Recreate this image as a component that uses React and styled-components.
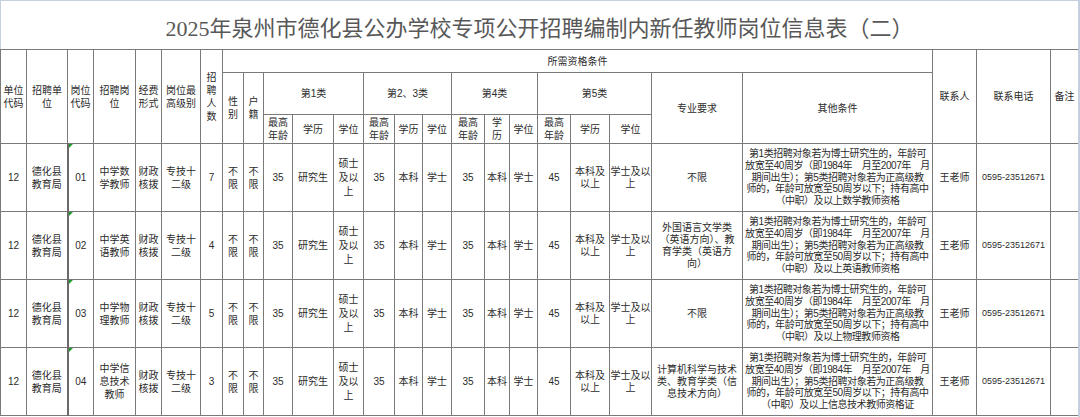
import React from 'react';
import styled, { createGlobalStyle } from 'styled-components';

const Global = createGlobalStyle`
  html, body { margin: 0; padding: 0; background: #fff; }
  body { font-family: "Liberation Sans", "Noto Sans CJK SC", sans-serif; }
`;

const Page = styled.div`
  width: 1080px;
  height: 417px;
  box-sizing: border-box;
  border-top: 1px solid #c6cfdf;
  border-right: 2px solid #c6cfdf;
  overflow: hidden;
  background: #fff;
`;

const Title = styled.div`
  height: 48px;
  box-sizing: border-box;
  border-left: 1px solid #c6cfdf;
  display: flex;
  align-items: center;
  justify-content: center;
  padding-top: 2px;
  font-family: "Liberation Serif", "Noto Sans CJK SC", serif;
  font-size: 22px;
  color: #585858;
`;

const Table = styled.table`
  width: 1078px;
  table-layout: fixed;
  border-collapse: collapse;
  border-left: 1px solid #222;
`;

const Row = styled.tr`
  height: ${(p) => p.$h}px;
`;

const Cell = styled.td`
  border: 1px solid #7a7a7a;
  padding: 0;
  text-align: center;
  vertical-align: middle;
  white-space: nowrap;
  overflow: hidden;
  font-size: ${(p) => p.$fs || 10}px;
  line-height: ${(p) => p.$lh || 13}px;
  letter-spacing: ${(p) => p.$ls || 0}px;
  color: #2b2b2b;
  font-weight: 400;
`;

const CodeCell = styled(Cell)`
  position: relative;
  border-left: 2px solid #6a6a6a;
  &::before {
    content: "";
    position: absolute;
    left: 0;
    top: 0;
    width: 0;
    height: 0;
    border-top: 4px solid #1f9a2a;
    border-right: 4px solid transparent;
  }
`;

const widths = [26, 41, 26, 42, 26, 39, 22, 21, 20, 29, 41, 30, 31, 28, 29, 33, 25, 28, 33, 39, 42, 91, 190, 44, 74, 28];

const L = ({ t }) =>
  t.split('|').map((s, i, a) => (
    <React.Fragment key={i}>
      {s}
      {i < a.length - 1 && <br />}
    </React.Fragment>
  ));

const other = (subj) =>
  `第1类招聘对象若为博士研究生的，年龄可|放宽至40周岁（即1984年　月至2007年　月|期间出生）；第5类招聘对象若为正高级教|师的，年龄可放宽至50周岁以下；持有高中|（中职）及以上${subj}`;

const rows = [
  { code: '01', post: '中学数|学教师', n: '7', major: '不限', other: other('数学教师资格') },
  { code: '02', post: '中学英|语教师', n: '4', major: '外国语言文学类|（英语方向）、教|育学类（英语方|向）', other: other('英语教师资格') },
  { code: '03', post: '中学物|理教师', n: '5', major: '不限', other: other('物理教师资格') },
  { code: '04', post: '中学信|息技术|教师', n: '3', major: '计算机科学与技术|类、教育学类（信|息技术方向）', other: other('信息技术教师资格证') },
];

const classHead = (edu4) => [
  <Cell key="a" as="th">最高<br />年龄</Cell>,
  <Cell key="b" as="th">{edu4 ? <L t="学|历" /> : '学历'}</Cell>,
  <Cell key="c" as="th">学位</Cell>,
];

export default function App() {
  return (
    <>
      <Global />
      <Page>
        <Title>2025年泉州市德化县公办学校专项公开招聘编制内新任教师岗位信息表（二）</Title>
        <Table>
          <colgroup>
            {widths.map((w, i) => (
              <col key={i} style={{ width: w }} />
            ))}
          </colgroup>
          <thead>
            <Row $h={23}>
              <Cell as="th" rowSpan={3}><L t="单位|代码" /></Cell>
              <Cell as="th" rowSpan={3}><L t="招聘单|位" /></Cell>
              <Cell as="th" rowSpan={3}><L t="岗位|代码" /></Cell>
              <Cell as="th" rowSpan={3}><L t="招聘岗|位" /></Cell>
              <Cell as="th" rowSpan={3}><L t="经费|形式" /></Cell>
              <Cell as="th" rowSpan={3}><L t="岗位最|高级别" /></Cell>
              <Cell as="th" rowSpan={3}><L t="招|聘|人|数" /></Cell>
              <Cell as="th" colSpan={16}>所需资格条件</Cell>
              <Cell as="th" rowSpan={3}>联系人</Cell>
              <Cell as="th" rowSpan={3}>联系电话</Cell>
              <Cell as="th" rowSpan={3}>备注</Cell>
            </Row>
            <Row $h={42}>
              <Cell as="th" rowSpan={2}><L t="性|别" /></Cell>
              <Cell as="th" rowSpan={2}><L t="户|籍" /></Cell>
              <Cell as="th" colSpan={3}>第1类</Cell>
              <Cell as="th" colSpan={3}>第2、3类</Cell>
              <Cell as="th" colSpan={3}>第4类</Cell>
              <Cell as="th" colSpan={3}>第5类</Cell>
              <Cell as="th" rowSpan={2}>专业要求</Cell>
              <Cell as="th" rowSpan={2}>其他条件</Cell>
            </Row>
            <Row $h={29}>
              {classHead(false)}
              {classHead(false)}
              {classHead(true)}
              {classHead(false)}
            </Row>
          </thead>
          <tbody>
            {rows.map((r) => (
              <Row $h={68} key={r.code}>
                <Cell>12</Cell>
                <Cell><L t="德化县|教育局" /></Cell>
                <CodeCell>{r.code}</CodeCell>
                <Cell><L t={r.post} /></Cell>
                <Cell><L t="财政|核拨" /></Cell>
                <Cell><L t="专技十|二级" /></Cell>
                <Cell>{r.n}</Cell>
                <Cell><L t="不|限" /></Cell>
                <Cell><L t="不|限" /></Cell>
                <Cell>35</Cell>
                <Cell>研究生</Cell>
                <Cell $lh={14}><L t="硕士|及以|上" /></Cell>
                <Cell>35</Cell>
                <Cell>本科</Cell>
                <Cell>学士</Cell>
                <Cell>35</Cell>
                <Cell>本科</Cell>
                <Cell>学士</Cell>
                <Cell>45</Cell>
                <Cell $lh={12}><L t="本科及|以上" /></Cell>
                <Cell $lh={12}><L t="学士及以|上" /></Cell>
                <Cell $lh={12}><L t={r.major} /></Cell>
                <Cell $lh={11.7} $ls={-0.45}><L t={r.other} /></Cell>
                <Cell>王老师</Cell>
                <Cell $fs={9}>0595-23512671</Cell>
                <Cell></Cell>
              </Row>
            ))}
          </tbody>
        </Table>
      </Page>
    </>
  );
}
